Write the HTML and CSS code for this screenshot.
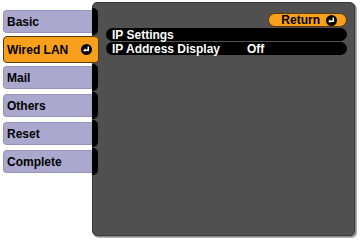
FILE: index.html
```html
<!DOCTYPE html>
<html>
<head>
<meta charset="utf-8">
<link rel="stylesheet" href="styles.css">
</head>
<body>
<div class="screen">
  <nav class="tabs">
    <div class="tab">Basic</div>
    <div class="tab active"><span>Wired LAN</span>
      <svg class="enter" width="11" height="11" viewBox="0 0 11 11"><circle cx="5.5" cy="5.5" r="5.5" fill="#000"/><path d="M7.3 2.6 V6.2 H3.8" fill="none" stroke="#fff" stroke-width="1.5"/><path d="M2.2 6.2 L4.4 4.2 V8.2 Z" fill="#fff"/></svg>
    </div>
    <div class="tab">Mail</div>
    <div class="tab">Others</div>
    <div class="tab">Reset</div>
    <div class="tab">Complete</div>
  </nav>
  <main class="panel">
    <div class="panel-top">
      <div class="return"><span>Return</span>
        <svg class="enter" width="11" height="11" viewBox="0 0 11 11"><circle cx="5.5" cy="5.5" r="5.5" fill="#000"/><path d="M7.3 2.6 V6.2 H3.8" fill="none" stroke="#fff" stroke-width="1.5"/><path d="M2.2 6.2 L4.4 4.2 V8.2 Z" fill="#fff"/></svg>
      </div>
    </div>
    <div class="row"><span class="label">IP Settings</span></div>
    <div class="row"><span class="label">IP Address Display</span><span class="value">Off</span></div>
  </main>
</div>
</body>
</html>
```
FILE: styles.css
```css
* { box-sizing: border-box; }
html, body { margin: 0; padding: 0; background: #fff; }
body {
  width: 360px;
  height: 242px;
  overflow: hidden;
  font-family: "Liberation Sans", Arial, sans-serif;
  font-weight: bold;
  font-size: 12px;
}
.screen {
  display: flex;
  padding: 2px 0 0 3px;
}
.tabs {
  width: 89px;
  padding-top: 8px;
  display: flex;
  flex-direction: column;
  gap: 5px;
  position: relative;
  z-index: 2;
}
.tab {
  position: relative;
  height: 23px;
  background: #aba8cd;
  border: 1px solid #9793bd;
  border-right: none;
  border-radius: 4px 0 0 4px;
  color: #000;
  padding-left: 3px;
  display: flex;
  align-items: center;
  line-height: 1;
}
.tab::after {
  content: "";
  position: absolute;
  left: 100%;
  top: -3px;
  bottom: -3px;
  width: 6px;
  background: #000;
  border-radius: 0 5px 5px 0;
  z-index: -1;
}
.tab.active {
  height: 27px;
  margin: -2px -7px -2px 0;
  background: #f8a01c;
  border: 1px solid #5a3a08;
  border-radius: 4px;
  justify-content: space-between;
  padding-right: 6px;
  z-index: 3;
}
.tab.active::after { display: none; }
.enter { display: block; flex: none; }
.panel {
  width: 263px;
  height: 234px;
  background: #505050;
  border: 1px solid #3a3a3a;
  border-radius: 5px;
  box-shadow: 1px 1px 0 #8c8c8c, 2px 2px 0 #b0b0b0;
  padding: 10px 7px 0 13px;
  display: flex;
  flex-direction: column;
  gap: 1px;
  color: #fff;
}
.panel-top {
  display: flex;
  justify-content: flex-end;
}
.return {
  width: 79px;
  height: 14px;
  background: #f8a01c;
  border: 1px solid #5a3a08;
  border-radius: 7px;
  color: #000;
  display: flex;
  align-items: center;
  justify-content: flex-end;
  gap: 6px;
  padding-right: 9px;
  line-height: 1;
}
.row {
  height: 13px;
  background: #000;
  border-radius: 7px;
  display: flex;
  align-items: center;
  padding-left: 6px;
  line-height: 1;
}
.label { width: 135px; }
.value { }
```
